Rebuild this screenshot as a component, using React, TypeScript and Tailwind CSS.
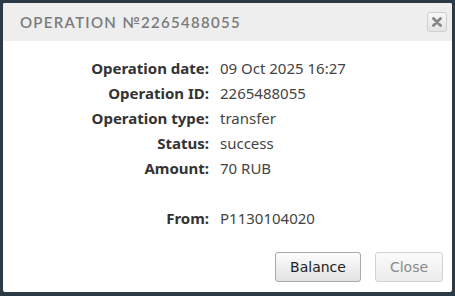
const rows: [string, string][] = [
  ['Operation date:', '09 Oct 2025 16:27'],
  ['Operation ID:', '2265488055'],
  ['Operation type:', 'transfer'],
  ['Status:', 'success'],
  ['Amount:', '70 RUB'],
  ['', ''],
  ['From:', 'P1130104020'],
]

export default function App() {
  return (
    <div className="h-[296px] w-[455px] overflow-hidden bg-[#2b3a44] pb-[4px] pl-[3px] pr-[3px] pt-[3px]">
      <div className="flex h-full flex-col rounded-[2px] bg-white">
        <div className="flex h-[38px] items-center justify-between rounded-t-[2px] bg-[#eeeeee] pl-[17px] pr-[5px]">
          <h1 className="font-['Lato',sans-serif] text-[15px] font-semibold tracking-[1.3px] text-[#7b7b7b]">
            OPERATION №2265488055
          </h1>
          <button className="flex h-[20px] w-[20px] items-center justify-center rounded-[3px] border border-[#cfcfcf] bg-gradient-to-b from-[#f8f8f8] to-[#e4e4e4]">
            <svg width="10" height="10" viewBox="0 0 10 10">
              <path d="M1.5 1.5 L8.5 8.5 M8.5 1.5 L1.5 8.5" stroke="#858585" strokeWidth="2.8" strokeLinecap="round" />
            </svg>
          </button>
        </div>

        <div className="grid grid-cols-[206px_1fr] gap-x-[11px] pt-[15px] font-['Noto_Sans',sans-serif] text-[15px] leading-[25px]">
          {rows.map(([label, value], i) => (
            <div key={i} className="contents">
              <div className="h-[25px] text-right font-bold text-[#333]">{label}</div>
              <div className="h-[25px] text-[#444]">{value}</div>
            </div>
          ))}
        </div>

        <div className="mt-auto flex justify-end gap-[14px] pb-[10px] pr-[9px] font-['DejaVu_Sans',sans-serif] text-[14px]">
          <button className="h-[30px] w-[86px] rounded-[3px] border border-[#a9a9a9] bg-gradient-to-b from-[#fdfdfd] to-[#e2e2e2] text-[#222]">
            Balance
          </button>
          <button className="h-[30px] w-[68px] rounded-[3px] border border-[#d3d3d3] bg-gradient-to-b from-[#fbfbfb] to-[#ececec] text-[#8a8a8a]">
            Close
          </button>
        </div>
      </div>
    </div>
  )
}
